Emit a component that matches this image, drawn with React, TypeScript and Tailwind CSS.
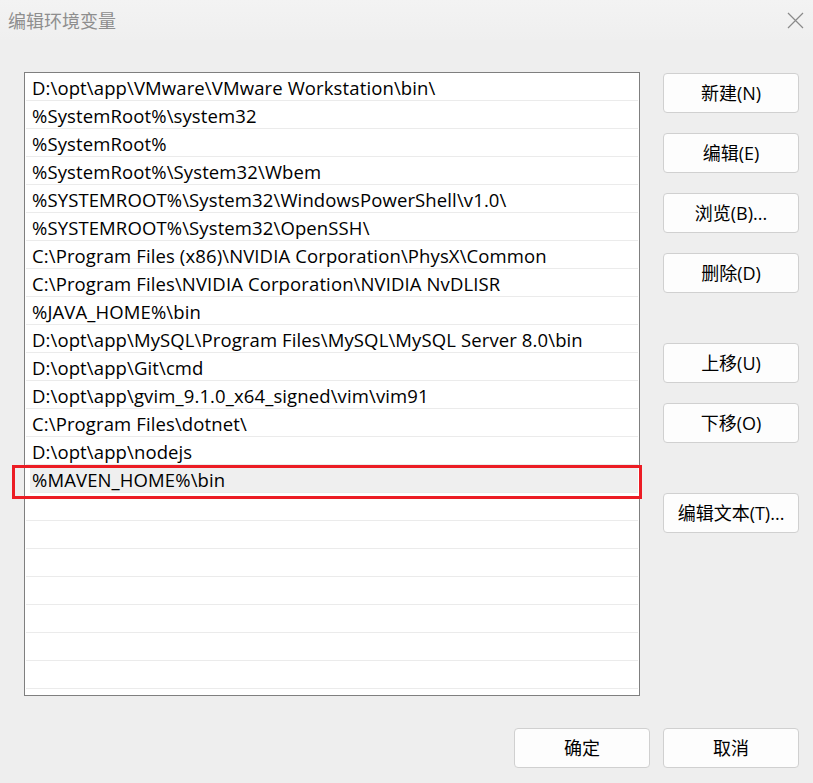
import React from "react";

const items = [
  "D:\\opt\\app\\VMware\\VMware Workstation\\bin\\",
  "%SystemRoot%\\system32",
  "%SystemRoot%",
  "%SystemRoot%\\System32\\Wbem",
  "%SYSTEMROOT%\\System32\\WindowsPowerShell\\v1.0\\",
  "%SYSTEMROOT%\\System32\\OpenSSH\\",
  "C:\\Program Files (x86)\\NVIDIA Corporation\\PhysX\\Common",
  "C:\\Program Files\\NVIDIA Corporation\\NVIDIA NvDLISR",
  "%JAVA_HOME%\\bin",
  "D:\\opt\\app\\MySQL\\Program Files\\MySQL\\MySQL Server 8.0\\bin",
  "D:\\opt\\app\\Git\\cmd",
  "D:\\opt\\app\\gvim_9.1.0_x64_signed\\vim\\vim91",
  "C:\\Program Files\\dotnet\\",
  "D:\\opt\\app\\nodejs",
  "%MAVEN_HOME%\\bin",
];

const font = "font-['Open_Sans','Noto_Sans_CJK_SC',sans-serif]";

function Btn({ children }: { children: React.ReactNode }) {
  return (
    <div className="w-[136px] h-[40px] rounded-[4px] border border-[#d0d0d0] bg-[#fdfdfd] flex items-center justify-center text-[18px] leading-[24px] text-black">
      {children}
    </div>
  );
}

export default function App() {
  const rows = [...items, ...Array(8).fill("")];
  return (
    <div className={`relative w-[813px] h-[783px] bg-[#eeeeee] overflow-hidden ${font}`}>
      <div className="h-[40px] bg-gradient-to-b from-[#f3f3f3] to-[#efefef] flex items-start justify-between pl-[8px] pr-[8px] pt-[8px]">
        <div className="text-[18px] leading-[24px] text-[#8e8e8e] font-['Noto_Sans_CJK_SC',sans-serif]">编辑环境变量</div>
        <svg width="17" height="17" viewBox="0 0 17 17" className="mt-[4px] mr-[1px]">
          <path d="M1 1 L16 16 M16 1 L1 16" stroke="#8a8a8a" strokeWidth="1.2" />
        </svg>
      </div>
      <div className="flex mt-[32px] ml-[24px]">
        <div className="w-[616px] h-[624px] border border-[#7f7f7f] bg-white overflow-hidden px-[1px]">
          {rows.map((t, i) => (
            <div
              key={i}
              className={`h-[28px] border-b border-[#ebebeb] text-[18.5px] tracking-[0.12px] leading-[29px] text-black whitespace-nowrap ${i === 14 ? "bg-[#efefef] ml-[4px] pl-[2px]" : "pl-[6px]"}`}
            >
              {t}
            </div>
          ))}
        </div>
        <div className="ml-[23px] pt-[1px] flex flex-col">
          <div className="flex flex-col gap-[20px]">
            <Btn>新建(N)</Btn>
            <Btn>编辑(E)</Btn>
            <Btn>浏览(B)...</Btn>
            <Btn>删除(D)</Btn>
          </div>
          <div className="flex flex-col gap-[20px] mt-[50px]">
            <Btn>上移(U)</Btn>
            <Btn>下移(O)</Btn>
          </div>
          <div className="mt-[50px]">
            <Btn>编辑文本(T)...</Btn>
          </div>
        </div>
      </div>
      <div className="flex justify-end gap-[13px] mt-[32px] pr-[14px]">
        <Btn>确定</Btn>
        <Btn>取消</Btn>
      </div>
      <div className="absolute left-[12px] top-[465px] w-[630px] h-[34px] border-[3px] border-[#ec1c24]" />
    </div>
  );
}
